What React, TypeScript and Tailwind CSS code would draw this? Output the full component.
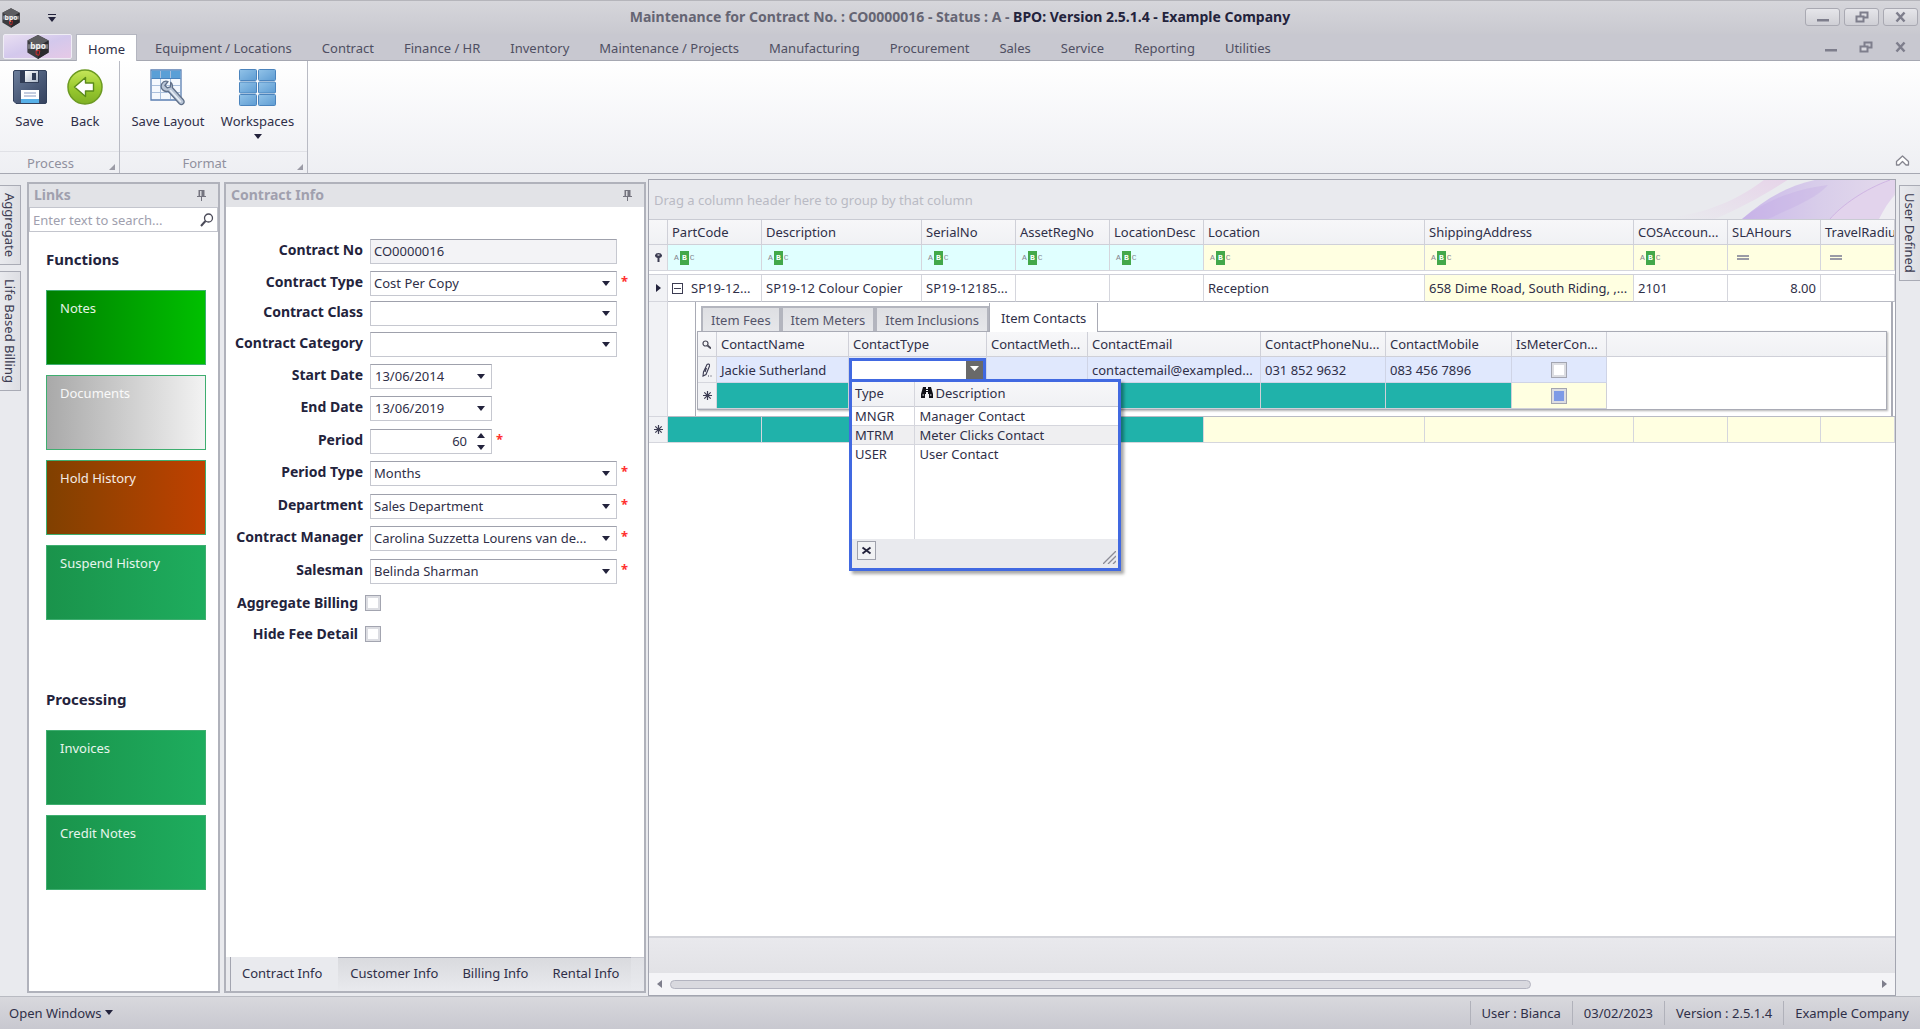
import { useState } from 'react'
import type { ReactNode } from 'react'

const ribbonTabs = [
  'Equipment / Locations', 'Contract', 'Finance / HR', 'Inventory', 'Maintenance / Projects', 'Manufacturing',
  'Procurement', 'Sales', 'Service', 'Reporting', 'Utilities',
]

const functionTiles = [
  { name: 'Notes', fill: 'from-[#008000] to-[#00c000]' },
  { name: 'Documents', fill: 'from-[#a9a9a9] to-[#f3f3f3]' },
  { name: 'Hold History', fill: 'from-[#804000] to-[#c04000]' },
  { name: 'Suspend History', fill: 'from-[#1a934b] to-[#1ead5e]' },
]

const processingTiles = [
  { name: 'Invoices', fill: 'from-[#1a934b] to-[#1ead5e]' },
  { name: 'Credit Notes', fill: 'from-[#1a934b] to-[#1ead5e]' },
]

type Field = { label: string; value: string; kind: 'readonly' | 'select' | 'date' | 'spin'; required?: boolean; row: string }

const fields: Field[] = [
  { label: 'Contract No', value: 'CO0000016', kind: 'readonly', row: 'h-8' },
  { label: 'Contract Type', value: 'Cost Per Copy', kind: 'select', required: true, row: 'h-[30px]' },
  { label: 'Contract Class', value: '', kind: 'select', row: 'h-[31px]' },
  { label: 'Contract Category', value: '', kind: 'select', row: 'h-8' },
  { label: 'Start Date', value: '13/06/2014', kind: 'date', row: 'h-8' },
  { label: 'End Date', value: '13/06/2019', kind: 'date', row: 'h-[33px]' },
  { label: 'Period', value: '60', kind: 'spin', required: true, row: 'h-8' },
  { label: 'Period Type', value: 'Months', kind: 'select', required: true, row: 'h-[33px]' },
  { label: 'Department', value: 'Sales Department', kind: 'select', required: true, row: 'h-8' },
  { label: 'Contract Manager', value: 'Carolina Suzzetta Lourens van de...', kind: 'select', required: true, row: 'h-[33px]' },
  { label: 'Salesman', value: 'Belinda Sharman', kind: 'select', required: true, row: 'h-7' },
]

type Column = { name: string; width: string; filter: 'abc' | 'eq'; required: boolean; value: string }

const columns: Column[] = [
  { name: 'PartCode', width: 'w-[94px]', filter: 'abc', required: true, value: 'SP19-12...' },
  { name: 'Description', width: 'w-[160px]', filter: 'abc', required: true, value: 'SP19-12 Colour Copier' },
  { name: 'SerialNo', width: 'w-[94px]', filter: 'abc', required: true, value: 'SP19-12185...' },
  { name: 'AssetRegNo', width: 'w-[94px]', filter: 'abc', required: true, value: '' },
  { name: 'LocationDesc', width: 'w-[94px]', filter: 'abc', required: true, value: '' },
  { name: 'Location', width: 'w-[221px]', filter: 'abc', required: false, value: 'Reception' },
  { name: 'ShippingAddress', width: 'w-[209px]', filter: 'abc', required: false, value: '658 Dime Road, South Riding, ,...' },
  { name: 'COSAccoun...', width: 'w-[94px]', filter: 'abc', required: false, value: '2101' },
  { name: 'SLAHours', width: 'w-[93px]', filter: 'eq', required: false, value: '8.00' },
  { name: 'TravelRadiu', width: '', filter: 'eq', required: false, value: '' },
]

const contactColumns = [
  { name: 'ContactName', width: 'w-[132px]', value: 'Jackie Sutherland' },
  { name: 'ContactType', width: 'w-[138px]', value: '' },
  { name: 'ContactMeth...', width: 'w-[101px]', value: '' },
  { name: 'ContactEmail', width: 'w-[173px]', value: 'contactemail@exampled...' },
  { name: 'ContactPhoneNu...', width: 'w-[125px]', value: '031 852 9632' },
  { name: 'ContactMobile', width: 'w-[126px]', value: '083 456 7896' },
  { name: 'IsMeterCon...', width: 'w-[95px]', value: '' },
]

const contactTypes = [
  ['MNGR', 'Manager Contact'],
  ['MTRM', 'Meter Clicks Contact'],
  ['USER', 'User Contact'],
]

function Caret({ className = '' }: { className?: string }) {
  return (
    <svg width="8" height="5" viewBox="0 0 8 5" className={className} aria-hidden="true">
      <path d="M0 0h8L4 5z" fill="#23233c" />
    </svg>
  )
}

function Logo({ className = '' }: { className?: string }) {
  return (
    <svg viewBox="0 0 24 26" className={className} aria-hidden="true">
      <path d="M12 0l11.5 6v13L12 26 .5 19V6z" fill="#3c3c40" />
      <path d="M12 0l11.5 6L12 12 .5 6z" fill="#5d5d61" />
      <path d="M12 13l11.5-7v13L12 26z" fill="#2a2a2d" />
      <path d="M1 10h22v5H1z" fill="#77777c" />
      <text x="12" y="15" textAnchor="middle" fontSize="9" fontWeight="700" fill="#f2f2f2">bpo</text>
      <path d="M10 17h4l-1 5-3-1z" fill="none" stroke="#d12a2a" strokeWidth="1" />
    </svg>
  )
}

function SaveIcon() {
  return (
    <svg width="34" height="36" viewBox="0 0 34 36" aria-hidden="true">
      <defs>
        <linearGradient id="disk" x1="0" y1="0" x2="1" y2="1">
          <stop offset="0" stopColor="#6d7f9c" />
          <stop offset=".55" stopColor="#4a5a78" />
          <stop offset="1" stopColor="#36435e" />
        </linearGradient>
        <linearGradient id="shutter" x1="0" y1="0" x2="1" y2="1">
          <stop offset="0" stopColor="#ffffff" />
          <stop offset="1" stopColor="#aab6c8" />
        </linearGradient>
      </defs>
      <path d="M2 1.500h30a1.500 1.500 0 0 1 1.500 1.500v30a1.500 1.500 0 0 1-1.500 1.500H3L.5 32V3A1.500 1.500 0 0 1 2 1.500z" fill="url(#disk)" stroke="#33415c" />
      <path d="M7 2h19v12H7z" fill="#303c55" />
      <path d="M12 2h13v11H12z" fill="url(#shutter)" />
      <path d="M19 4h4v7h-4z" fill="#2e3a54" />
      <path d="M8 21h18v13H8z" fill="#fff" />
      <path d="M8 30h18v4H8z" fill="#57b0e8" />
      <path d="M11 24h12M11 27h12" stroke="#8a9ac0" />
    </svg>
  )
}

function BackIcon() {
  return (
    <svg width="36" height="36" viewBox="0 0 36 36" aria-hidden="true">
      <defs>
        <linearGradient id="ball" x1="0" y1="0" x2="0" y2="1">
          <stop offset="0" stopColor="#c6e65a" />
          <stop offset=".5" stopColor="#9bcb30" />
          <stop offset="1" stopColor="#7fb024" />
        </linearGradient>
      </defs>
      <circle cx="18" cy="18" r="17" fill="url(#ball)" stroke="#6c9a22" strokeWidth="1.500" />
      <path d="M7.500 18L18.500 8.500v5.500h8v8h-8v5.500z" fill="#fff" stroke="#5b8a1a" strokeWidth="1.400" strokeLinejoin="round" />
    </svg>
  )
}

function LayoutIcon() {
  return (
    <svg width="36" height="37" viewBox="0 0 36 37" aria-hidden="true">
      <path d="M1 1h30v30H1z" fill="#f4f8fd" stroke="#5b7fb2" strokeWidth="1.300" />
      <path d="M1.500 1.500h29v8h-29z" fill="#5a9fd6" />
      <path d="M10.500 2v28M20.500 2v28M2 16.500h28M2 23.500h28" stroke="#a9bfdc" />
      <path d="M1.500 9.500h29" stroke="#4a83bd" />
      <path d="M18 12.500c-2.500-.8-5 .2-6.200 2.300-1 2-.8 4.300.8 6 1.500 1.600 3.600 2 5.600 1.400l11 12.300c1.200 1.200 2.900 1.300 4 .3 1.200-1 1.200-2.800.1-4L22.300 18.500c.5-2-.2-4-1.600-5.200l-.2 4.500-3.300 1-2.300-2.300z" fill="#b9c5d6" stroke="#5f6f88" strokeWidth="1.300" strokeLinejoin="round" />
      <path d="M20.500 21.500l10 11" stroke="#e8eef5" strokeWidth="1.500" strokeLinecap="round" />
    </svg>
  )
}

function WorkspacesIcon() {
  return (
    <svg width="37" height="37" viewBox="0 0 37 37" aria-hidden="true">
      <defs>
        <linearGradient id="pane" x1="0" y1="0" x2="1" y2="1">
          <stop offset="0" stopColor="#92c3e8" />
          <stop offset="1" stopColor="#5e9cd3" />
        </linearGradient>
      </defs>
      {[1, 13.5, 26].map(y => [1, 20].map(x => (
        <rect key={`${x}-${y}`} x={x - 0.5} y={y - 0.5} width="17" height="11" rx="1" fill="url(#pane)" stroke="#4b84bd" />
      )))}
    </svg>
  )
}

function PinIcon() {
  return (
    <svg width="9" height="11" viewBox="0 0 9 11" aria-hidden="true">
      <path d="M1.500 0h6v6H9v1H5v4H4V7H0V6h1.500z" fill="#74747f" />
      <path d="M3 1h1.500v5H3z" fill="#d6d7db" />
    </svg>
  )
}

function WindowGlyph({ kind }: { kind: 'min' | 'restore' | 'close' }) {
  return (
    <svg width="14" height="12" viewBox="0 0 14 12" aria-hidden="true">
      {kind === 'min' && <path d="M1 8h12v2.500H1z" fill="#7e7e8c" />}
      {kind === 'restore' && (
        <>
          <path d="M5.500 1.500h7v5h-7z" fill="none" stroke="#7e7e8c" strokeWidth="2" />
          <path d="M1.500 5.500h7v5h-7z" fill="#d8d8de" stroke="#7e7e8c" strokeWidth="2" />
        </>
      )}
      {kind === 'close' && <path d="M2.500 1.500l8 9M10.500 1.500l-8 9" stroke="#7e7e8c" strokeWidth="2.500" />}
    </svg>
  )
}

const windowButtons = [
  { kind: 'min', label: 'Minimize' },
  { kind: 'restore', label: 'Restore' },
  { kind: 'close', label: 'Close' },
] as const

function TitleBar() {
  return (
    <header className="flex h-[34px] items-center border-t border-[#b5b5bb] bg-linear-to-b from-[#d6d6db] to-[#c9c9d0]">
      <div className="flex w-[120px] items-center gap-7 pl-[2px]">
        <Logo className="h-5 w-[18px]" />
        <button aria-label="Customize toolbar" className="flex flex-col items-center gap-[2px]">
          <span className="h-px w-2 bg-[#23233c]" />
          <Caret />
        </button>
      </div>
      <h1 className="flex-1 pb-px text-center text-[14px] font-bold text-[#656573]">
        Maintenance for Contract No. : CO0000016 - Status : A - <span className="text-[#23233c]">BPO: Version 2.5.1.4 - Example Company</span>
      </h1>
      <div className="flex w-[120px] justify-end gap-1 pb-px pr-[2px]">
        {windowButtons.map(b => (
          <button key={b.kind} aria-label={b.label} className="flex h-[18px] w-[35px] items-center justify-center rounded-[3px] border border-[#a9a9b2] bg-linear-to-b from-[#e6e6ea] to-[#cfcfd5]">
            <WindowGlyph kind={b.kind} />
          </button>
        ))}
      </div>
    </header>
  )
}

function RibbonTabs() {
  return (
    <nav className="flex h-[27px] items-stretch border-b border-[#a6a8b2] bg-[#c8c8d0]">
      <button aria-label="Application menu" className="ml-[3px] flex h-[25px] w-[69px] items-center justify-center rounded-[2px] border border-[#efedf5] bg-linear-to-br from-[#e9dff2] via-[#d3c8ec] to-[#e6c9e6]">
        <Logo className="h-6 w-6" />
      </button>
      <button className="z-10 -mb-px ml-1 mr-[3px] border-x border-t border-[#b4b6c0] bg-white px-[11px] pt-px">Home</button>
      {ribbonTabs.map(t => <button key={t} className="px-[15px] pt-[2px] text-[#4f4f62]">{t}</button>)}
      <div className="ml-auto flex gap-[21px] pr-3">
        {windowButtons.map(b => (
          <button key={b.kind} aria-label={`${b.label} document`}><WindowGlyph kind={b.kind} /></button>
        ))}
      </div>
    </nav>
  )
}

function RibbonGroup({ name, children }: { name: string; children: ReactNode }) {
  return (
    <section className="flex flex-col border-r border-[#b9bbc4]">
      <div className="flex flex-1 items-start px-1 pt-2">{children}</div>
      <div className="flex h-[22px] items-center border-t border-[#e0e1e6] pr-1 text-[#90909e]">
        <span className="flex-1 pr-2 text-center">{name}</span>
        <svg width="6" height="6" viewBox="0 0 6 6" className="mt-2" aria-hidden="true"><path d="M6 0v6H0z" fill="#9b9ba6" /></svg>
      </div>
    </section>
  )
}

function RibbonButton({ label, icon, drop, width }: { label: string; icon: ReactNode; drop?: boolean; width: string }) {
  return (
    <button className={`flex flex-col items-center whitespace-nowrap ${width}`}>
      <span className="flex h-[42px] items-start">{icon}</span>
      <span className="leading-5">{label}</span>
      {drop && <Caret className="mt-[3px]" />}
    </button>
  )
}

function Ribbon() {
  return (
    <div className="flex h-[113px] border-b border-[#a6a8b2] bg-linear-to-b from-white to-[#eeeff3]">
      <RibbonGroup name="Process">
        <RibbonButton label="Save" icon={<SaveIcon />} width="w-[51px]" />
        <RibbonButton label="Back" icon={<BackIcon />} width="w-[60px]" />
      </RibbonGroup>
      <RibbonGroup name="Format">
        <RibbonButton label="Save Layout" icon={<LayoutIcon />} width="w-[88px]" />
        <RibbonButton label="Workspaces" icon={<WorkspacesIcon />} drop width="w-[91px]" />
      </RibbonGroup>
      <button aria-label="Collapse ribbon" className="mb-[6px] ml-auto mr-[10px] self-end">
        <svg width="15" height="12" viewBox="0 0 15 12" aria-hidden="true">
          <path d="M1.500 6.500l6-5.500 6 5.500v3.500h-2.500l-3.500-3.500L4 10H1.500z" fill="#fff" stroke="#85858f" strokeWidth="1.300" strokeLinejoin="round" />
        </svg>
      </button>
    </div>
  )
}

function SideTab({ name, side }: { name: string; side: 'left' | 'right' }) {
  const edge = side === 'left' ? 'border-r' : 'border-l'
  return (
    <button className={`flex w-[21px] items-center justify-center border-t border-b border-[#a9abb5] bg-linear-to-r from-[#e9eaee] to-[#dddee3] pt-[7px] pb-[7px] text-[#3c3c52] [writing-mode:vertical-rl] ${edge}`}>
      {name}
    </button>
  )
}

function Panel({ title, width, children }: { title: string; width: string; children: ReactNode }) {
  return (
    <section className={`flex shrink-0 flex-col border-2 border-[#b0b2bb] bg-white ${width}`}>
      <header className="flex h-[23px] items-center justify-between bg-[#e2e3e7] pb-px pl-[5px] pr-3">
        <h2 className="text-[14px] font-bold text-[#a0a0ae]">{title}</h2>
        <button aria-label={`Pin ${title}`}><PinIcon /></button>
      </header>
      {children}
    </section>
  )
}

function Tiles({ items }: { items: { name: string; fill: string }[] }) {
  return (
    <div className="flex flex-col gap-[10px]">
      {items.map(t => (
        <button key={t.name} className={`flex h-[75px] w-[160px] items-start border border-[#3fae70] bg-linear-to-r px-[13px] pt-2 text-left text-white/90 ${t.fill}`}>
          {t.name}
        </button>
      ))}
    </div>
  )
}

function LinksPanel() {
  return (
    <Panel title="Links" width="w-[193px]">
      <label className="flex h-[25px] items-center border border-[#c3c5cd] px-[3px]">
        <input aria-label="Search links" placeholder="Enter text to search..." className="min-w-0 flex-1 outline-none placeholder:text-[#a0a0ae]" />
        <svg width="14" height="14" viewBox="0 0 14 14" aria-hidden="true">
          <circle cx="8.500" cy="5" r="4" fill="none" stroke="#4a4a58" strokeWidth="1.300" />
          <path d="M5.500 8L1 13" stroke="#4a4a58" strokeWidth="2" />
        </svg>
      </label>
      <div className="px-[17px] pt-[15px]">
        <h3 className="mb-[19px] text-[15px] leading-6 font-bold text-[#23233c]">Functions</h3>
        <Tiles items={functionTiles} />
        <h3 className="mb-[19px] mt-[67px] text-[15px] leading-6 font-bold text-[#23233c]">Processing</h3>
        <Tiles items={processingTiles} />
      </div>
    </Panel>
  )
}

const box = 'h-[25px] border border-[#c6c8d0] border-t-[#9fa1ac] bg-white pb-px'

function FieldRow({ field }: { field: Field }) {
  const id = field.label.toLowerCase().replaceAll(' ', '-')
  return (
    <div className={`flex ${field.row}`}>
      <label htmlFor={id} className="mr-[7px] w-[137px] text-right text-[14px] leading-[21px] font-bold whitespace-nowrap text-[#23233c]">{field.label}</label>
      {field.kind === 'readonly' && <input id={id} readOnly value={field.value} className="h-[25px] w-[247px] border border-[#c6c8d0] border-t-[#9fa1ac] bg-[#f3f3f6] px-[3px] pb-px" />}
      {field.kind === 'select' && (
        <span className="relative">
          <select id={id} className={`w-[247px] appearance-none pl-[3px] pr-6 ${box}`}><option>{field.value}</option></select>
          <Caret className="pointer-events-none absolute top-[10px] right-[7px]" />
        </span>
      )}
      {field.kind === 'date' && (
        <span className={`flex w-[122px] items-center pl-1 pr-[6px] ${box}`}>
          <input id={id} defaultValue={field.value} className="min-w-0 flex-1 outline-none" />
          <button aria-label={`Open ${field.label} calendar`}><Caret /></button>
        </span>
      )}
      {field.kind === 'spin' && (
        <span className={`flex w-[122px] items-center pl-1 pr-[6px] ${box}`}>
          <input id={id} defaultValue={field.value} className="mr-[10px] min-w-0 flex-1 text-right outline-none" />
          <span className="flex flex-col gap-[7px]">
            <button aria-label="Increase"><Caret className="rotate-180" /></button>
            <button aria-label="Decrease"><Caret /></button>
          </span>
        </span>
      )}
      {field.required && <span className="ml-1 text-[13px] leading-5 font-bold text-[#ff3030]">*</span>}
    </div>
  )
}

const checkbox = 'size-4 appearance-none border border-[#a3a5b0] bg-white shadow-[inset_0_0_0_2px_#dcdde2] checked:bg-[#6f8fe0] indeterminate:bg-[#7d9ae6]'

function ContractPanel() {
  const [tab, setTab] = useState('Contract Info')
  return (
    <Panel title="Contract Info" width="w-[422px]">
      <form className="flex-1 pt-8">
        {fields.map(f => <FieldRow key={f.label} field={f} />)}
        {['Aggregate Billing', 'Hide Fee Detail'].map(name => (
          <label key={name} className="flex h-[31px] items-center gap-[7px] text-[14px] font-bold text-[#23233c]">
            <span className="w-[132px] text-right whitespace-nowrap">{name}</span>
            <input type="checkbox" className={checkbox} />
          </label>
        ))}
      </form>
      <div className="flex h-[34px] bg-[#e9eaee] pl-1">
        {['Contract Info', 'Customer Info', 'Billing Info', 'Rental Info'].map(t => (
          <button key={t} onClick={() => setTab(t)} className={t === tab ? 'border-l border-[#a3a5b0] pb-[3px] pl-[11px] pr-4' : 'border-t border-[#a9abb5] bg-linear-to-b from-[#d9dade] to-[#e9eaee] px-3 pb-1'}>{t}</button>
        ))}
        <span className="flex-1 border-t border-[#c9cad1] bg-linear-to-b from-[#e0e1e5] to-[#e9eaee]" />
      </div>
    </Panel>
  )
}

function AbcMark() {
  return (
    <span className="flex items-center gap-px pl-[2px] font-['Liberation_Mono',monospace] text-[8px] leading-none text-[#85858f]">
      <span>A</span>
      <span className="flex h-[14px] w-[9px] items-center justify-center bg-[#43a84a] font-bold text-white">B</span>
      <span>C</span>
    </span>
  )
}

function NewRowMark() {
  return (
    <svg width="9" height="9" viewBox="0 0 9 9" className="mx-auto" aria-hidden="true">
      <path d="M4.500 0v9M0 4.500h9M1.300 1.300l6.400 6.400M7.700 1.300L1.300 7.700" stroke="#3c3c52" strokeWidth="1.200" />
    </svg>
  )
}

function ContactTypeEditor() {
  return (
    <div className="relative h-6 w-[137px] border-[3px] border-[#4169e1] bg-white">
      <div className="flex h-[18px]">
        <input aria-label="ContactType" className="min-w-0 flex-1 outline-none" />
        <button aria-label="Open contact types" className="flex w-[17px] items-start justify-center bg-[#696969] pt-[5px]">
          <svg width="9" height="5" viewBox="0 0 9 5" aria-hidden="true"><path d="M0 0h9L4.500 5z" fill="#fff" /></svg>
        </button>
      </div>
      <div className="absolute top-[18px] -left-[3px] z-20 w-[272px] border-[3px] border-[#4169e1] bg-[#e9eaee] shadow-[3px_3px_3px_rgba(0,0,0,0.35)]">
        <table className="w-full table-fixed border-collapse bg-white">
          <thead>
            <tr className="h-[25px] border-b border-[#c9cbd3] bg-linear-to-b from-[#f7f7f9] to-[#f0f1f4] text-left">
              <th className="w-[62px] border-r border-[#d5d6dd] px-[3px] pb-[2px] font-normal">Type</th>
              <th className="px-[6px] pb-[2px] font-normal">
                <span className="flex items-center gap-[3px]">
                  <svg width="12" height="11" viewBox="0 0 12 11" aria-hidden="true">
                    <path d="M2 0h3v2h2V0h3l2 7v4H8V7H7V5H5v2H4v4H0V7z" fill="#111118" />
                    <path d="M1.500 8h1.500M9 8h1.500M5 3.500h2" stroke="#fff" />
                  </svg>
                  Description
                </span>
              </th>
            </tr>
          </thead>
          <tbody>
            {contactTypes.map(([code, name]) => (
              <tr key={code} className={code === 'MTRM' ? 'h-[19px] border-y border-[#d5d6dd] bg-[#efeff1]' : 'h-[19px]'}>
                <td className="border-r border-[#d5d6dd] px-[3px] leading-[18px]">{code}</td>
                <td className="px-[5px] leading-[18px]">{name}</td>
              </tr>
            ))}
            <tr className="h-[75px]"><td className="border-r border-[#d5d6dd]" /><td /></tr>
          </tbody>
        </table>
        <div className="flex h-[29px] items-end justify-between pb-1 pl-[5px] pr-[2px]">
          <button aria-label="Close contact types" className="mb-1 flex size-[19px] items-center justify-center border border-[#9fa1ac] bg-[#f1f2f4]">
            <svg width="11" height="9" viewBox="0 0 11 9" aria-hidden="true"><path d="M1.500 1.500l8 6M9.500 1.500l-8 6" stroke="#23233c" strokeWidth="1.900" fill="none" /></svg>
          </button>
          <svg width="13" height="13" viewBox="0 0 13 13" aria-hidden="true"><path d="M0 13L13 0M5 13l8-8M10 13l3-3" stroke="#8b8b96" strokeWidth="1.300" /></svg>
        </div>
      </div>
    </div>
  )
}

const headCell = 'border-r border-b border-[#cfd0d8] px-1 text-left font-normal whitespace-nowrap overflow-hidden'
const markCell = 'border-r border-b border-[#d5d6dd] bg-[#f1f2f5]'

function ContactsTable() {
  return (
    <table className="w-full table-fixed border-separate border-spacing-0 border border-[#a9abb5] bg-white shadow-[1px_1px_2px_rgba(0,0,0,0.3)]">
      <colgroup>
        <col className="w-[19px]" />
        {contactColumns.map(c => <col key={c.name} className={c.width} />)}
        <col />
      </colgroup>
      <thead>
        <tr className="h-[25px] bg-linear-to-b from-[#f7f7f9] to-[#f0f1f4]">
          <th className={headCell}>
            <svg width="9" height="9" viewBox="0 0 9 9" aria-hidden="true">
              <circle cx="3.500" cy="3.500" r="2.500" fill="none" stroke="#4a4a58" strokeWidth="1.200" />
              <path d="M5.500 5.500L9 8.500" stroke="#4a4a58" strokeWidth="1.800" />
            </svg>
          </th>
          {contactColumns.map(c => <th key={c.name} className={headCell}>{c.name}</th>)}
          <th className="border-b border-[#cfd0d8]" />
        </tr>
      </thead>
      <tbody>
        <tr className="h-[26px] bg-[#e0e8fd]">
          <td className={markCell}>
            <svg width="10" height="14" viewBox="0 0 10 14" className="mx-auto" aria-hidden="true">
              <path d="M5 1.500C6 .5 8 1 7.500 3L4 11.500 1 13l.5-4zM4.500 5L3 9" fill="none" stroke="#3c3c52" strokeWidth="1.100" />
              <path d="M6 13h1M8.500 13h1" stroke="#3c3c52" />
            </svg>
          </td>
          {contactColumns.map(c => (
            <td key={c.name} className={c.name === 'ContactType' ? 'border-r border-b border-[#cfd4e6] p-0' : 'border-r border-b border-[#cfd4e6] px-1 whitespace-nowrap'}>
              {c.name === 'ContactType' && <ContactTypeEditor />}
              {c.name === 'IsMeterCon...' && <input type="checkbox" aria-label="IsMeterContact" className={`mx-auto block ${checkbox}`} />}
              {c.value}
            </td>
          ))}
          <td className="bg-white" />
        </tr>
        <tr className="h-[26px]">
          <td className={markCell}><NewRowMark /></td>
          {contactColumns.map(c => (
            <td key={c.name} className={c.name === 'IsMeterCon...' ? 'border-r border-b border-[#cfd0d8] bg-[#ffffe1]' : 'border-r border-b border-[#cfd0d8] bg-[#20b2aa]'}>
              {c.name === 'IsMeterCon...' && (
                <input type="checkbox" aria-label="IsMeterContact, new row" ref={el => { if (el) el.indeterminate = true }} className={`mx-auto block ${checkbox}`} />
              )}
            </td>
          ))}
          <td />
        </tr>
      </tbody>
    </table>
  )
}

function DetailView() {
  return (
    <div className="ml-[27px] mr-[2px] border-l border-r-2 border-[#a9abb5] pb-[6px]">
      <div className="flex h-[29px] items-end pl-[5px]">
        {['Item Fees', 'Item Meters', 'Item Inclusions'].map(t => (
          <button key={t} className="h-[25px] border-2 border-b-0 border-[#b3b5be] bg-linear-to-b from-[#dedfe3] to-[#e6e7ea] px-2 text-[#55556a]">{t}</button>
        ))}
        <button className="z-10 -mb-px h-[29px] border-x border-[#a9abb5] bg-white px-[11px]">Item Contacts</button>
      </div>
      <div className="mr-1 pl-px"><ContactsTable /></div>
    </div>
  )
}

function GroupPanel() {
  return (
    <div className="relative flex h-[39px] items-center overflow-hidden bg-[#e9eaee] px-[5px] text-[#b9bac4]">
      Drag a column header here to group by that column
      <svg width="220" height="40" viewBox="0 0 220 40" className="absolute right-0 bottom-0" aria-hidden="true">
        <defs>
          <linearGradient id="pinkWave" x1="0" y1="1" x2="1" y2="0">
            <stop offset="0" stopColor="#e9eaee" />
            <stop offset="1" stopColor="#e6cfe8" />
          </linearGradient>
          <linearGradient id="violetWave" x1="0" y1="0" x2="1" y2="0">
            <stop offset="0" stopColor="#cbb9ea" />
            <stop offset=".5" stopColor="#d8cdea" />
            <stop offset="1" stopColor="#e4daec" />
          </linearGradient>
        </defs>
        <path d="M0 38C40 32 70 16 90 0h24c-24 16-50 30-74 40H0z" fill="url(#pinkWave)" opacity=".8" />
        <path d="M67 40C90 20 115 5 145 0h75v40z" fill="url(#violetWave)" />
        <path d="M67 40c25-20 55-30 86-34-12 14-35 22-60 34z" fill="#bfa6e6" opacity=".3" />
        <path d="M155 40c12-14 35-30 65-40v12l-14 28z" fill="#e2d3ec" />
        <path d="M155 40c12-14 35-30 60-39" stroke="#d0b5e4" fill="none" />
        <path d="M204 40c5-10 10-18 16-24v24z" fill="#eeedf2" />
      </svg>
    </div>
  )
}

function ContractGrid() {
  return (
    <section className="flex min-w-0 flex-1 flex-col border border-[#a3a5b0] bg-white">
      <GroupPanel />
      <table className="w-full table-fixed border-separate border-spacing-0 border-t border-[#c9cbd3]">
        <colgroup>
          <col className="w-[19px]" />
          {columns.map(c => <col key={c.name} className={c.width} />)}
        </colgroup>
        <thead>
          <tr className="h-[25px] bg-linear-to-b from-[#f7f7f9] to-[#f0f1f4]">
            <th className={headCell} />
            {columns.map(c => <th key={c.name} className={headCell}>{c.name}</th>)}
          </tr>
          <tr className="h-[26px]">
            <td className={markCell}>
              <svg width="7" height="9" viewBox="0 0 7 9" className="mx-auto" aria-hidden="true">
                <path d="M3.500 0a3.500 2.500 0 0 1 1 4.900V9h-2V4.900a3.500 2.500 0 0 1 1-4.900z" fill="#3c3c52" />
                <path d="M2.500 2h2" stroke="#fff" />
              </svg>
            </td>
            {columns.map(c => (
              <td key={c.name} className={c.required ? 'border-r border-b border-[#d5d6dd] bg-[#e0ffff] px-1' : 'border-r border-b border-[#d5d6dd] bg-[#ffffe1] px-1'}>
                {c.filter === 'abc' ? <AbcMark /> : <span className="ml-[5px] block h-[5px] w-3 border-y-2 border-[#9a9ba6]" />}
              </td>
            ))}
          </tr>
        </thead>
        <tbody>
          <tr className="h-1"><td colSpan={11} className="border-b border-[#cfd0d8] p-0" /></tr>
          <tr className="h-[27px]">
            <td className={markCell}>
              <svg width="5" height="8" viewBox="0 0 5 8" className="mx-auto" aria-hidden="true"><path d="M0 0l5 4-5 4z" fill="#23233c" /></svg>
            </td>
            {columns.map(c => (
              <td
                key={c.name}
                className={`overflow-hidden border-r border-b border-[#d5d6dd] border-b-[#b9bbc4] px-1 whitespace-nowrap ${c.name === 'ShippingAddress' ? 'bg-[#ffffe1]' : ''} ${c.name === 'SLAHours' ? 'text-right' : ''}`}
              >
                {c.name === 'PartCode' ? (
                  <span className="flex items-center gap-2">
                    <button aria-label="Collapse row" className="flex size-[11px] shrink-0 items-center justify-center border border-[#3c3c52]">
                      <span className="h-px w-[7px] bg-[#3c3c52]" />
                    </button>
                    {c.value}
                  </span>
                ) : c.value}
              </td>
            ))}
          </tr>
          <tr>
            <td className={markCell} />
            <td colSpan={10} className="border-b border-[#b9bbc4] p-0"><DetailView /></td>
          </tr>
          <tr className="h-[26px]">
            <td className={markCell}><NewRowMark /></td>
            {columns.map(c => <td key={c.name} className={c.required ? 'border-r border-b border-[#d5d6dd] bg-[#20b2aa]' : 'border-r border-b border-[#d5d6dd] bg-[#ffffe1]'} />)}
          </tr>
        </tbody>
      </table>
      <div className="mt-auto h-[37px] border-t-2 border-[#d3d4da] bg-linear-to-b from-[#e9e9ed] to-[#e2e2e6]" />
      <div className="flex h-[22px] items-center justify-between bg-[#f4f4f7] px-2">
        <button aria-label="Scroll left"><svg width="5" height="8" viewBox="0 0 5 8" aria-hidden="true"><path d="M5 0L0 4l5 4z" fill="#7e7e8c" /></svg></button>
        <div className="ml-2 mr-auto h-[9px] w-[70%] rounded-full border border-[#b3b4c0] bg-[#d9d9df]" />
        <button aria-label="Scroll right"><svg width="5" height="8" viewBox="0 0 5 8" aria-hidden="true"><path d="M0 0l5 4-5 4z" fill="#7e7e8c" /></svg></button>
      </div>
    </section>
  )
}

function StatusBar() {
  return (
    <footer className="flex h-[33px] items-center border-t border-[#b9bbc2] bg-linear-to-b from-[#d8d8dd] to-[#c8c8d0] pb-px pl-[9px]">
      <button className="flex items-center gap-1">Open Windows <Caret /></button>
      <div className="ml-auto flex">
        {['User : Bianca', '03/02/2023', 'Version : 2.5.1.4', 'Example Company'].map(s => (
          <span key={s} className="border-l border-[#b0b1ba] px-[11px] leading-6">{s}</span>
        ))}
      </div>
    </footer>
  )
}

export default function App() {
  return (
    <div className="flex min-h-screen flex-col bg-[#e9eaee] font-['Noto_Sans',sans-serif] text-[13px] leading-[18px] text-[#2f2f48]">
      <TitleBar />
      <RibbonTabs />
      <Ribbon />
      <main className="flex flex-1 pt-[5px]">
        <div className="mr-[6px] flex flex-col gap-[6px] pt-[6px]">
          <SideTab name="Aggregate" side="left" />
          <SideTab name="Life Based Billing" side="left" />
        </div>
        <div className="mr-[2px] flex gap-1 pb-[3px] pt-[3px]">
          <LinksPanel />
          <ContractPanel />
        </div>
        <ContractGrid />
        <div className="ml-[3px] flex flex-col pt-[6px]">
          <SideTab name="User Defined" side="right" />
        </div>
      </main>
      <StatusBar />
    </div>
  )
}
